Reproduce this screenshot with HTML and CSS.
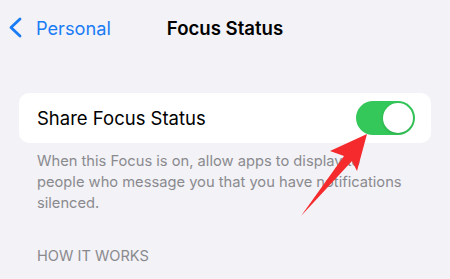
FILE: index.html
```html
<!DOCTYPE html>
<html>
<head>
<meta charset="utf-8">
<link rel="stylesheet" href="styles.css">
</head>
<body>
<div class="screen">
  <header class="nav">
    <div class="back">
      <svg class="chev" width="16" height="22" viewBox="0 0 16 22"><path d="M12 2 L3 10.5 L12 19" fill="none" stroke="#1a7cf5" stroke-width="2.8" stroke-linecap="round" stroke-linejoin="round"/></svg>
      <span class="back-label">Personal</span>
    </div>
    <div class="title">Focus Status</div>
  </header>
  <main class="content">
    <section class="card">
      <span class="row-label">Share Focus Status</span>
      <div class="toggle"><div class="knob"></div></div>
    </section>
    <p class="footer">When this Focus is on, allow apps to display to<br>people who message you that you have notifications silenced.</p>
    <div class="section-head">HOW IT WORKS</div>
  </main>
  <svg class="arrow" width="450" height="279" viewBox="0 0 450 279"><polygon points="367,134 330,151 344,156 301,216 352,161 357,171" fill="#f42a2d"/></svg>
</div>
</body>
</html>
```
FILE: styles.css
```css
html, body { margin: 0; padding: 0; }
body {
  background: #f2f2f7;
  font-family: Inter, "Noto Sans", sans-serif;
  width: 450px;
  height: 279px;
  overflow: hidden;
}
.screen { position: relative; width: 450px; height: 279px; }
.nav {
  position: relative;
  height: 56px;
  display: flex;
  align-items: center;
  justify-content: center;
}
.back {
  position: absolute;
  left: 8px;
  top: 0;
  height: 56px;
  display: flex;
  align-items: center;
}
.chev { display: block; margin-right: 12px; }
.back-label { color: #1a7cf5; font-size: 18.2px; }
.title { font-size: 18.6px; font-weight: 600; color: #000; }
.content { padding: 37px 19px 0; }
.card {
  background: #fff;
  border-radius: 10px;
  height: 50px;
  display: flex;
  align-items: center;
  justify-content: space-between;
  padding: 0 16px 0 18px;
}
.row-label { font-size: 18.5px; color: #000; }
.toggle {
  width: 59px;
  height: 34px;
  border-radius: 17px;
  background: #34c759;
  display: flex;
  align-items: center;
  justify-content: flex-end;
  padding: 0 2px;
  box-sizing: border-box;
}
.knob {
  width: 30px;
  height: 30px;
  border-radius: 50%;
  background: #fff;
  box-shadow: 0 1px 3px rgba(0,0,0,0.15);
}
.footer {
  margin: 8px 0 0;
  padding: 0 18px;
  font-size: 14.7px;
  line-height: 21px;
  color: #8a8a8e;
}
.section-head {
  margin-top: 33px;
  padding: 0 18px;
  font-size: 14.6px;
  color: #8a8a8e;
}
.arrow { position: absolute; left: 0; top: 0; pointer-events: none; }
```
